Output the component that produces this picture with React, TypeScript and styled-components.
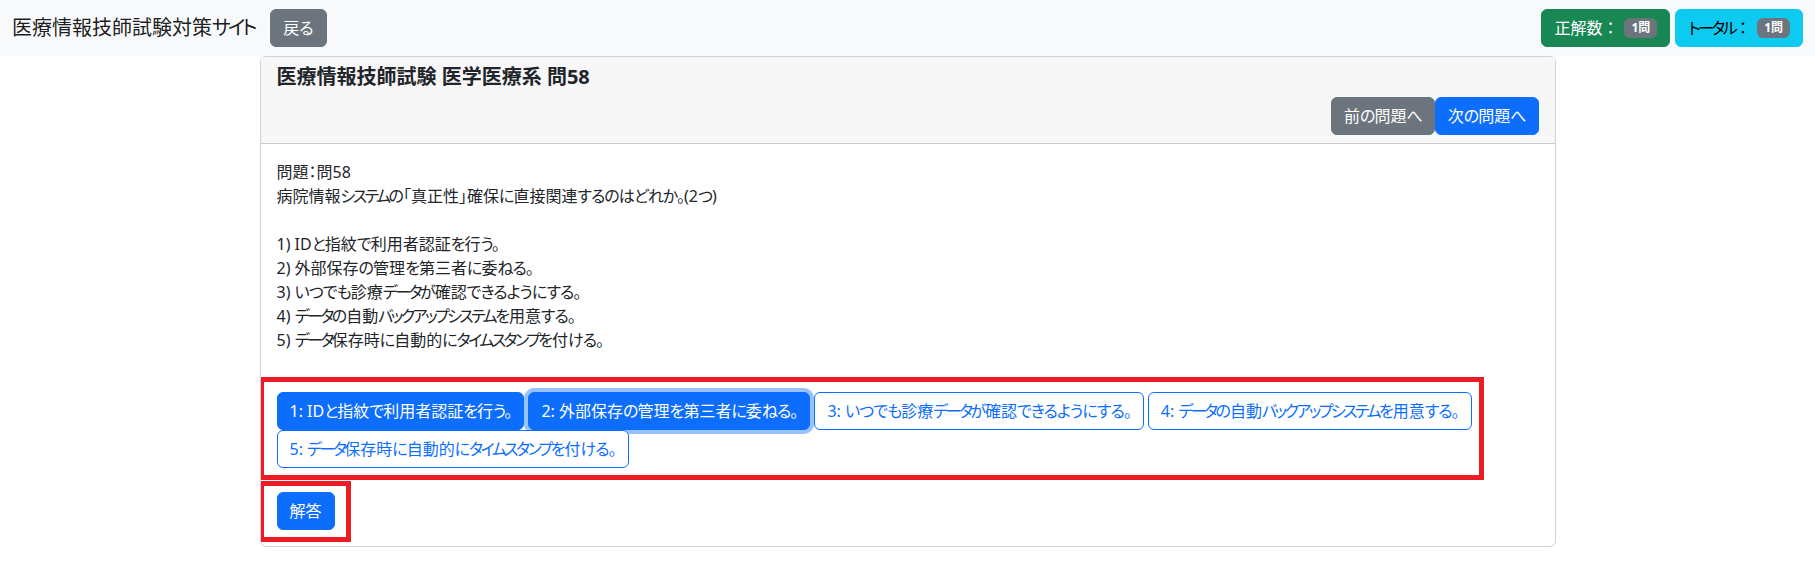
import styled, { createGlobalStyle, css } from "styled-components";

const GlobalStyle = createGlobalStyle`
  * { box-sizing: border-box; }
  body {
    margin: 0;
    background: #fff;
    color: #212529;
    font-family: "Noto Sans", "Noto Sans CJK JP", sans-serif;
    font-feature-settings: "palt";
    font-size: 16px;
    line-height: 1.5;
  }
`;

type Variant = "primary" | "secondary" | "success" | "info" | "outline";

const variants: Record<Variant, ReturnType<typeof css>> = {
    primary: css`background: #0d6efd; border-color: #0d6efd; color: #fff;`,
    secondary: css`background: #6c757d; border-color: #6c757d; color: #fff;`,
    success: css`background: #198754; border-color: #198754; color: #fff;`,
    info: css`background: #0dcaf0; border-color: #0dcaf0; color: #000;`,
    outline: css`background: #fff; border-color: #0d6efd; color: #0d6efd;`,
};

// Yu Gothic UI (used in the original) sets kana narrower than Noto CJK
const Kata = styled.span`
  letter-spacing: -0.16em;
`;

const Hira = styled.span`
  letter-spacing: -0.06em;
`;

function Jp({ children }: { children: string }) {
    const parts = children.split(/([\u30A0-\u30FF]+|[\u3040-\u309F\u3001\u3002]+)/);
    return (
        <span>
            {parts.map((p, i) => {
                if (/^[\u30A0-\u30FF]+$/.test(p)) return <Kata key={i}>{p}</Kata>;
                if (/^[\u3040-\u309F\u3001\u3002]+$/.test(p)) return <Hira key={i}>{p}</Hira>;
                return p;
            })}
        </span>
    );
}

const Btn = styled.button<{ $variant: Variant; $focus?: boolean }>`
  display: inline-flex;
  align-items: center;
  height: 38px;
  padding: 6px 12px;
  border: 1px solid transparent;
  border-radius: 6px;
  font: inherit;
  line-height: 1.5;
  white-space: nowrap;
  cursor: pointer;
  ${p => variants[p.$variant]}
  ${p => p.$focus && css`box-shadow: 0 0 0 4px rgba(49, 132, 253, 0.5);`}
`;

const NavBar = styled.nav`
  display: flex;
  align-items: center;
  justify-content: space-between;
  height: 56px;
  padding: 0 12px;
  background: #f8f9fa;
`;

const NavLeft = styled.div`
  display: flex;
  align-items: center;
`;

const Brand = styled.span`
  font-size: 20px;
  line-height: 30px;
  margin-right: 16px;
  color: rgba(0, 0, 0, 0.9);
`;

const NavRight = styled.div`
  display: flex;
  gap: 5px;
`;

const Colon = styled.span`
  font-feature-settings: normal;
`;

const Badge = styled.span`
  display: inline-block;
  padding: 4px 7px;
  border-radius: 6px;
  background: #6c757d;
  color: #fff;
  font-size: 12px;
  font-weight: 700;
  line-height: 1;
  margin-left: 6px;
`;

const Container = styled.div`
  max-width: 1320px;
  margin: 0 auto;
  padding: 0 12px;
`;

const Card = styled.div`
  border: 1px solid rgba(0, 0, 0, 0.175);
  border-radius: 6px;
  overflow: hidden;
`;

const CardHeader = styled.div`
  padding: 8px 16px;
  background: #f7f7f7;
  border-bottom: 1px solid rgba(0, 0, 0, 0.175);
`;

const CardTitle = styled.h5`
  margin: 0 0 8px;
  font-size: 20px;
  line-height: 24px;
  font-weight: 700;
`;

const HeaderActions = styled.div`
  display: flex;
  justify-content: flex-end;
`;

const CardBody = styled.div`
  padding: 16px;
`;

const Line = styled.div`
  min-height: 24px;
`;

const Highlight = styled.div<{ $width: number; $top: number; $pad: string; $bottom?: number }>`
  width: ${p => p.$width}px;
  margin: ${p => p.$top}px 0 ${p => p.$bottom ?? 0}px -18px;
  padding: ${p => p.$pad};
  border: 5px solid #ed1c24;
`;

const OptionList = styled.div`
  display: flex;
  flex-wrap: wrap;
  column-gap: 4px;
`;

const options = [
    "IDと指紋で利用者認証を行う。",
    "外部保存の管理を第三者に委ねる。",
    "いつでも診療データが確認できるようにする。",
    "データの自動バックアップシステムを用意する。",
    "データ保存時に自動的にタイムスタンプを付ける。",
];

const selected = [0, 1];

function App() {
    const lines = [
        "問題：問58",
        "病院情報システムの「真正性」確保に直接関連するのはどれか。(2つ)",
        "",
        ...options.map((o, i) => `${i + 1}) ${o}`),
    ];

    return (
        <>
            <GlobalStyle />
            <NavBar>
                <NavLeft>
                    <Brand><Jp>医療情報技師試験対策サイト</Jp></Brand>
                    <Btn $variant="secondary">戻る</Btn>
                </NavLeft>
                <NavRight>
                    <Btn $variant="success">正解数<Colon>：</Colon><Badge>1問</Badge></Btn>
                    <Btn $variant="info"><Jp>トータル</Jp><Colon>：</Colon><Badge>1問</Badge></Btn>
                </NavRight>
            </NavBar>
            <Container>
                <Card>
                    <CardHeader>
                        <CardTitle>医療情報技師試験 医学医療系 問58</CardTitle>
                        <HeaderActions>
                            <Btn $variant="secondary"><Jp>前の問題へ</Jp></Btn>
                            <Btn $variant="primary"><Jp>次の問題へ</Jp></Btn>
                        </HeaderActions>
                    </CardHeader>
                    <CardBody>
                        {lines.map((l, i) => (
                            <Line key={i}><Jp>{l}</Jp></Line>
                        ))}
                        <Highlight $width={1225} $top={25} $pad="10px 0 7px 13px">
                            <OptionList>
                                {options.map((o, i) => (
                                    <Btn
                                        key={i}
                                        $variant={selected.includes(i) ? "primary" : "outline"}
                                        $focus={i === 1}
                                    >
                                        <Jp>{`${i + 1}: ${o}`}</Jp>
                                    </Btn>
                                ))}
                            </OptionList>
                        </Highlight>
                        <Highlight $width={92} $top={1} $bottom={-12} $pad="6px 0 7px 13px">
                            <Btn $variant="primary">解答</Btn>
                        </Highlight>
                    </CardBody>
                </Card>
            </Container>
        </>
    );
}

export default App;
